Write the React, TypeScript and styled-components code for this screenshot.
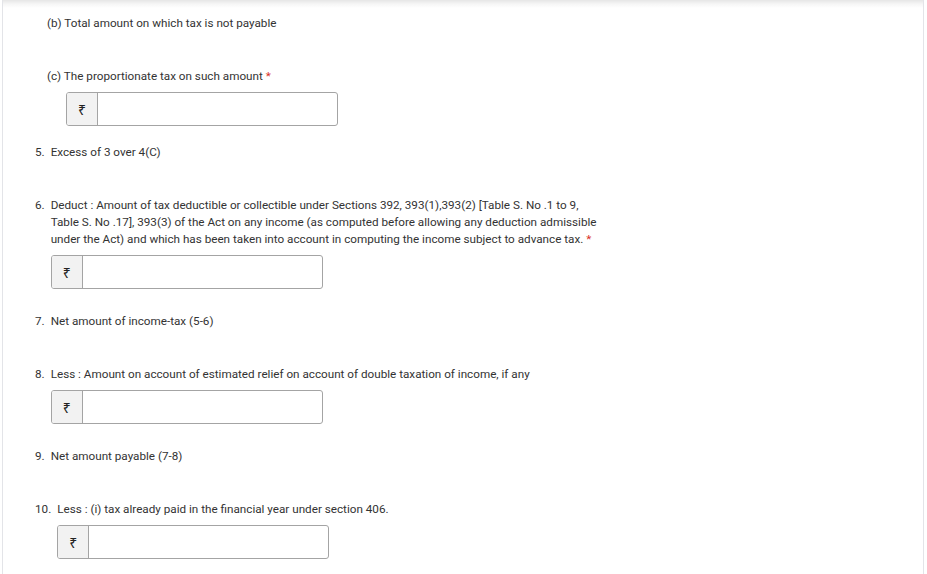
import React from "react";
import styled, { createGlobalStyle } from "styled-components";

const Global = createGlobalStyle`
  html, body { margin: 0; padding: 0; background: #fff; }
  body { font-family: Roboto, "Noto Sans", "DejaVu Sans", sans-serif; }
`;

const Page = styled.div`
  padding-left: 2px;
  min-height: 100vh;
  box-sizing: border-box;
`;

const Card = styled.div`
  width: 922px;
  min-height: 100vh;
  box-sizing: border-box;
  border-left: 1px solid #e3e4e8;
  border-right: 1px solid #e3e4e8;
  background: linear-gradient(#e6e6e6 0px, #f6f6f6 4px, #ffffff 8px);
  padding: 15px 0 0 32px;
  display: flex;
  flex-direction: column;
`;

const Item = styled.div<{ $top: number; $indent?: number }>`
  margin-top: ${(p) => p.$top}px;
  margin-left: ${(p) => p.$indent ?? 0}px;
  display: flex;
  font-size: 11.7px;
  line-height: 17px;
  color: #333;
`;

const Num = styled.span`
  flex: none;
  margin-right: 6px;
`;

const Body = styled.div`
  flex: 1;
`;

const Label = styled.div`
  white-space: nowrap;
`;

const Req = styled.span`
  color: #d93025;
  margin-left: 3px;
`;

const InputBox = styled.div<{ $shift?: number }>`
  margin-top: 7px;
  margin-left: ${(p) => p.$shift ?? 0}px;
  width: 272px;
  height: 34px;
  box-sizing: border-box;
  border: 1px solid #a4a4a4;
  border-radius: 3px;
  display: flex;
  overflow: hidden;
  background: #fff;
`;

const Prefix = styled.div`
  width: 30px;
  flex: none;
  background: #f2f2f2;
  border-right: 1px solid #a4a4a4;
  display: flex;
  align-items: center;
  justify-content: center;
  font-size: 14px;
  color: #222;
  font-family: "Noto Sans", "DejaVu Sans", sans-serif;
`;

const Field = styled.input`
  flex: 1;
  border: none;
  outline: none;
  background: transparent;
  font-size: 12px;
  padding: 0 8px;
`;

const Money = ({ shift }: { shift?: number }) => (
  <InputBox $shift={shift}>
    <Prefix>₹</Prefix>
    <Field type="text" />
  </InputBox>
);

export default function App() {
  return (
    <>
      <Global />
      <Page>
        <Card>
          <Item $top={0} $indent={12}>
            <Body>
              <Label>(b) Total amount on which tax is not payable</Label>
            </Body>
          </Item>
          <Item $top={36} $indent={12}>
            <Body>
              <Label>
                (c) The proportionate tax on such amount<Req>*</Req>
              </Label>
              <Money shift={19} />
            </Body>
          </Item>
          <Item $top={18}>
            <Num>5.</Num>
            <Body>
              <Label>Excess of 3 over 4(C)</Label>
            </Body>
          </Item>
          <Item $top={36}>
            <Num>6.</Num>
            <Body>
              <Label>
                Deduct : Amount of tax deductible or collectible under Sections 392, 393(1),393(2) [Table S. No .1 to 9,
                <br />
                Table S. No .17], 393(3) of the Act on any income (as computed before allowing any deduction admissible
                <br />
                under the Act) and which has been taken into account in computing the income subject to advance tax.
                <Req>*</Req>
              </Label>
              <Money />
            </Body>
          </Item>
          <Item $top={24}>
            <Num>7.</Num>
            <Body>
              <Label>Net amount of income-tax (5-6)</Label>
            </Body>
          </Item>
          <Item $top={36}>
            <Num>8.</Num>
            <Body>
              <Label>Less : Amount on account of estimated relief on account of double taxation of income, if any</Label>
              <Money />
            </Body>
          </Item>
          <Item $top={24}>
            <Num>9.</Num>
            <Body>
              <Label>Net amount payable (7-8)</Label>
            </Body>
          </Item>
          <Item $top={36}>
            <Num>10.</Num>
            <Body>
              <Label>Less : (i) tax already paid in the financial year under section 406.</Label>
              <Money />
            </Body>
          </Item>
        </Card>
      </Page>
    </>
  );
}
